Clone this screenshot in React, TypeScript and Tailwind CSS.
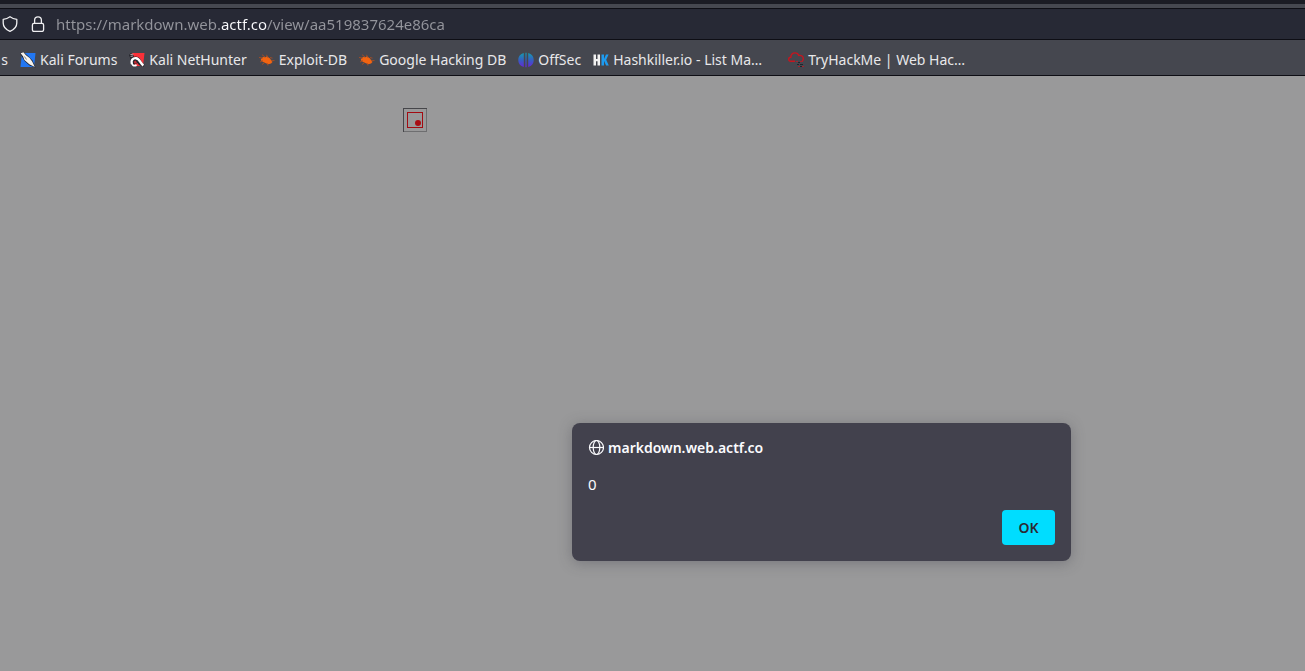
import type { ReactNode } from "react";

function KaliForumsIcon() {
  return (
    <svg className="size-4 shrink-0" viewBox="0 0 16 16" aria-hidden="true">
      <path d="M2 1H15.5L14 15H0.5Z" fill="#2277f2" />
      <path d="M0 1.2 3.5 0 8 4 12.5 8.5 15.5 15.5 9.5 13.5 4.5 9Z" fill="#20222b" />
      <path d="M.6 1.2 3.4 .3 6 3.2 9.6 6 12.2 9.6 14.8 15 9.3 12.2 4.4 8 3 4.3Z" fill="#f5f3ee" />
      <path d="M4.5 4.5 6.5 7.5" stroke="#55565c" strokeWidth=".7" />
    </svg>
  );
}

function NetHunterIcon() {
  return (
    <svg className="size-4 shrink-0" viewBox="0 0 16 16" aria-hidden="true">
      <path d="M2 1H15.5L14 14H5Z" fill="#fa3038" />
      <path d="M0 3 2 1 4 2 5 5 2 8Z" fill="#24242b" />
      <path d="M3 14C.2 11 .6 7.4 3.4 5.4 6.2 3.6 10 4.4 11.6 7.4c1 2 1.8 4 4 5.2l-1 2.2C11.4 14.4 9.8 13 8.4 11Z" fill="#24242b" />
      <path d="M2.8 12C1.6 8.2 4 5.9 7 6.2c4 .4 4 5 7.4 7.2" stroke="#fff" strokeWidth="2.4" fill="none" />
      <path d="M2.6 10.5C3 13.6 5 14.3 7.6 13.2" stroke="#fff" strokeWidth="1.8" fill="none" />
      <path d="M4.6 9.8 6.6 8.6 8 10.6 6 12Z" fill="#c42a33" />
      <path d="M1.4 2.6 4.4 2.2M1.6 4.4 4 4" stroke="#f8d9d9" strokeWidth=".7" />
    </svg>
  );
}

function ExploitIcon() {
  return (
    <svg className="size-4 shrink-0" viewBox="0 0 16 16" aria-hidden="true">
      <path d="M1.8 7.2 4 5 6.5 5.2 8 4.3 11 6.6 13.5 10 12 11.5 9.5 12.2 5.7 10.8 2.4 9Z" fill="#f26411" />
      <path d="M0 5.5 4 6M3 2.7 6 5M7.5 2.8 9 6M11 5.5 13.5 6.2M1 10 4 8.5M3 12.5 6 10.2M9 13.5 8 11M12 8.8 15.5 8.5" stroke="#b34f20" strokeWidth=".8" fill="none" />
    </svg>
  );
}

function OffSecIcon() {
  return (
    <svg className="size-4 shrink-0" viewBox="0 0 16 16" aria-hidden="true">
      <defs>
        <linearGradient id="offsec" x1="0" y1="0" x2="0" y2="1">
          <stop offset="0" stopColor="#159cae" />
          <stop offset=".5" stopColor="#345fc1" />
          <stop offset="1" stopColor="#6726d8" />
        </linearGradient>
      </defs>
      <path d="M5.8 1V15C2.3 14.2.3 11.4.3 8S2.3 1.8 5.8 1ZM10.2 1V15c3.5-.8 5.5-3.6 5.5-7S13.7 1.8 10.2 1ZM7.4.7H8.6V15.3H7.4Z" fill="url(#offsec)" />
    </svg>
  );
}

function HashkillerIcon() {
  return (
    <svg className="size-4 shrink-0" viewBox="0 0 16 16" aria-hidden="true">
      <path d="M.5 2.5H3V7H4.5V2.5H7V13.5H4.5V9.2H3V13.5H.5Z" fill="#f2f2f2" />
      <path d="M8.5 2.5H11V7L13 2.5H15.6L13.2 7.7 15.8 13.5H13.1L11 8.8V13.5H8.5Z" fill="#1d9bf0" />
    </svg>
  );
}

function TryHackMeIcon() {
  return (
    <svg className="size-4 shrink-0" viewBox="0 0 16 16" aria-hidden="true">
      <path d="M7 9.3H2.8C1.4 9.3.7 8.5.7 7.3c0-1.3.8-2.1 2.1-2.1C3 2.5 4.5.9 7 .9c2 0 3.2.9 3.8 2.6 2.6-.4 4.4.8 4.5 3.2.1 1-.5 1.9-1.2 2.3" stroke="#c8141e" strokeWidth="1.4" fill="none" />
      <path d="M8 9.5H10M12 9.5H15M10 14.5H12M14 14.5H16" stroke="#a5222c" />
      <path d="M10 10.5H12M9 12.5H11M12 12.5H15M12 14.5H14" stroke="#20252c" />
    </svg>
  );
}

function ShieldIcon() {
  return (
    <svg className="size-4 shrink-0" viewBox="0 0 16 16" fill="none" stroke="#f0f0f2" strokeWidth="1.3" strokeLinejoin="round" aria-hidden="true">
      <path d="M8 .7C10 2.2 12.2 3 14.8 3.3V7c0 3.8-2.6 6.6-6.8 8.4C3.8 13.6 1.2 10.8 1.2 7V3.3C3.8 3 6 2.2 8 .7Z" />
    </svg>
  );
}

function LockIcon() {
  return (
    <svg className="size-4 shrink-0" viewBox="0 0 16 16" fill="none" stroke="#f0f0f2" strokeWidth="1.3" aria-hidden="true">
      <rect x="2.4" y="7.4" width="11.2" height="8" rx="1.6" />
      <path d="M4.6 7.4V4.2a3.4 3.4 0 0 1 6.8 0V7.4" />
    </svg>
  );
}

function GlobeIcon() {
  return (
    <svg className="size-4 shrink-0" viewBox="0 0 16 16" fill="none" stroke="#fbfbfe" strokeWidth="1.2" aria-hidden="true">
      <circle cx="8.5" cy="7.5" r="7" />
      <ellipse cx="8.5" cy="7.5" rx="3.3" ry="7" />
      <path d="M1.5 7.5H15.5" />
    </svg>
  );
}

function BrokenImage() {
  return (
    <svg className="size-6" viewBox="0 0 24 24" role="img" aria-label="Image" shapeRendering="crispEdges">
      <path d="M.5 24V.5H24" stroke="#46464a" fill="none" />
      <path d="M1 23.5H23.5V1" stroke="#6e6e70" fill="none" />
      <rect x="4.5" y="4.5" width="15" height="15" stroke="#a30b12" fill="none" />
      <circle cx="15" cy="15" r="3" fill="#a80d14" shapeRendering="auto" />
    </svg>
  );
}

const bookmarks: { label: string; icon: ReactNode; wide?: boolean }[] = [
  { label: "Kali Forums", icon: <KaliForumsIcon /> },
  { label: "Kali NetHunter", icon: <NetHunterIcon /> },
  { label: "Exploit-DB", icon: <ExploitIcon /> },
  { label: "Google Hacking DB", icon: <ExploitIcon /> },
  { label: "OffSec", icon: <OffSecIcon /> },
  { label: "Hashkiller.io - List Ma…", icon: <HashkillerIcon />, wide: true },
  { label: "TryHackMe | Web Hac…", icon: <TryHackMeIcon />, wide: true },
];

export default function App() {
  return (
    <div className="flex min-h-screen flex-col bg-[#99999a] font-['Noto_Sans',sans-serif] text-sm">
      <header className="text-[#e8e8ea]">
        <div className="h-1 bg-[#1b1c24]" />
        <div className="h-1 bg-[#464850]" />
        <div className="flex h-8 items-center gap-2.5 border-y border-[#0e0e15] bg-[#272935] pl-0.5">
          <div className="flex items-center gap-3">
            <ShieldIcon />
            <LockIcon />
          </div>
          <input
            type="text"
            aria-label="Address"
            defaultValue="https://markdown.web.actf.co/view/aa519837624e86ca"
            className="h-6 flex-1 bg-[linear-gradient(to_right,#94959c_165px,#fbfbfe_165px,#fbfbfe_211px,#94959c_211px)] bg-clip-text text-[15px] text-transparent caret-white outline-none"
          />
        </div>
        <nav aria-label="Bookmarks" className="flex h-9 items-center gap-3 overflow-hidden border-b border-[#0e0e15] bg-[#45474f] pt-1 whitespace-nowrap">
          <a href="#docs" aria-label="Kali Docs" className="flex w-2 justify-end overflow-hidden">s</a>
          {bookmarks.map(({ label, icon, wide }) => (
            <a key={label} href="#bookmark" className={wide ? "flex w-[183px] items-center gap-1" : "flex items-center gap-1"}>
              {icon}
              <span>{label}</span>
            </a>
          ))}
        </nav>
      </header>

      <main className="relative flex-1">
        <div className="pt-8 pl-[403px]">
          <BrokenImage />
        </div>
        <div
          role="alertdialog"
          aria-labelledby="dialog-title"
          aria-describedby="dialog-message"
          className="absolute top-[347px] left-[572px] flex w-[499px] flex-col rounded-lg bg-[#42414d] p-4 text-[#fbfbfe] shadow-[0_2px_14px_rgba(58,57,68,0.35)]"
        >
          <h1 id="dialog-title" className="flex h-[18px] items-center gap-1 font-semibold">
            <GlobeIcon />
            markdown.web.actf.co
          </h1>
          <p id="dialog-message" className="mt-[15px] text-[15px] leading-6">0</p>
          <button type="button" className="mt-[14px] h-[35px] w-[53px] self-end rounded bg-[#00ddff] font-semibold text-[#2b2a33]">
            OK
          </button>
        </div>
      </main>
    </div>
  );
}
